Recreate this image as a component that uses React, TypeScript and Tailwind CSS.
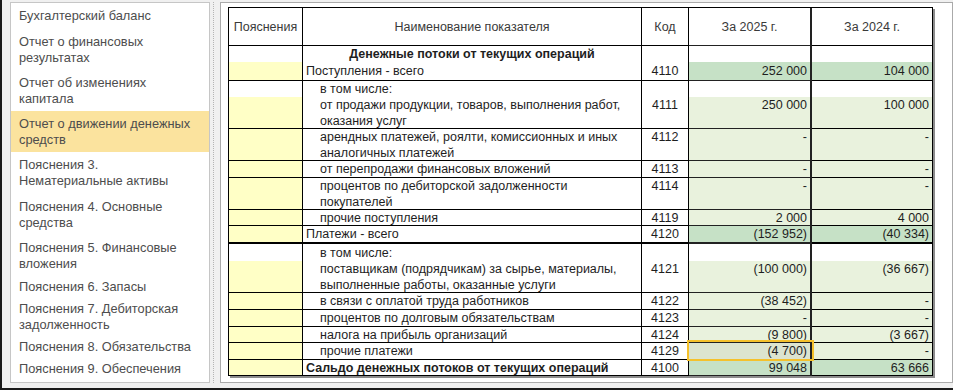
import React from "react";

type Row = {
  note: string;
  name: string;
  nameCls: string;
  code: string;
  v1: string;
  v2: string;
  valBg: string;
  open?: boolean;
  thick?: boolean;
  top?: boolean;
};

const YELLOW = "bg-[#ffffc6]";
const LIGHT = "bg-[#e9f2dd]";
const DARK = "bg-[#c6e1c6]";
const WHITE = "bg-white";

const rows: Row[] = [
  { note: WHITE, name: "Денежные потоки от текущих операций", nameCls: "font-bold text-center", code: "", v1: "", v2: "", valBg: WHITE, open: true },
  { note: YELLOW, name: "Поступления - всего", nameCls: "pl-[3px] items-center", code: "4110", v1: "252 000", v2: "104 000", valBg: DARK },
  { note: WHITE, name: "в том числе:", nameCls: "pl-[17px]", code: "", v1: "", v2: "", valBg: WHITE, open: true },
  { note: YELLOW, name: "от продажи продукции, товаров, выполнения работ, оказания услуг", nameCls: "pl-[17px]", code: "4111", v1: "250 000", v2: "100 000", valBg: LIGHT, top: true },
  { note: YELLOW, name: "арендных платежей, роялти, комиссионных и иных аналогичных платежей", nameCls: "pl-[17px]", code: "4112", v1: "-", v2: "-", valBg: LIGHT, top: true },
  { note: YELLOW, name: "от перепродажи финансовых вложений", nameCls: "pl-[17px]", code: "4113", v1: "-", v2: "-", valBg: LIGHT, top: true },
  { note: YELLOW, name: "процентов по дебиторской задолженности покупателей", nameCls: "pl-[17px]", code: "4114", v1: "-", v2: "-", valBg: LIGHT, top: true },
  { note: YELLOW, name: "прочие поступления", nameCls: "pl-[17px]", code: "4119", v1: "2 000", v2: "4 000", valBg: LIGHT, top: true },
  { note: YELLOW, name: "Платежи - всего", nameCls: "pl-[3px]", code: "4120", v1: "(152 952)", v2: "(40 334)", valBg: DARK, thick: true, top: true },
  { note: WHITE, name: "в том числе:", nameCls: "pl-[17px]", code: "", v1: "", v2: "", valBg: WHITE, open: true },
  { note: YELLOW, name: "поставщикам (подрядчикам) за сырье, материалы, выполненные работы, оказанные услуги", nameCls: "pl-[17px] pr-[20px]", code: "4121", v1: "(100 000)", v2: "(36 667)", valBg: LIGHT, top: true },
  { note: YELLOW, name: "в связи с оплатой труда работников", nameCls: "pl-[17px]", code: "4122", v1: "(38 452)", v2: "-", valBg: LIGHT, top: true },
  { note: YELLOW, name: "процентов по долговым обязательствам", nameCls: "pl-[17px]", code: "4123", v1: "-", v2: "-", valBg: LIGHT, top: true },
  { note: YELLOW, name: "налога на прибыль организаций", nameCls: "pl-[17px]", code: "4124", v1: "(9 800)", v2: "(3 667)", valBg: LIGHT, top: true },
  { note: YELLOW, name: "прочие платежи", nameCls: "pl-[17px]", code: "4129", v1: "(4 700)", v2: "-", valBg: LIGHT, top: true },
  { note: YELLOW, name: "Сальдо денежных потоков от текущих операций", nameCls: "pl-[3px] font-bold", code: "4100", v1: "99 048", v2: "63 666", valBg: DARK, top: true },
];

const menu: { label: string; h: string }[] = [
  { label: "Бухгалтерский баланс", h: "h-[26px]" },
  { label: "Отчет о финансовых результатах", h: "h-[41px]" },
  { label: "Отчет об изменениях капитала", h: "h-[41px]" },
  { label: "Отчет о движении денежных средств", h: "h-[41px]" },
  { label: "Пояснения 3. Нематериальные активы", h: "h-[41px]" },
  { label: "Пояснения 4. Основные средства", h: "h-[43px]" },
  { label: "Пояснения 5. Финансовые вложения", h: "h-[40px]" },
  { label: "Пояснения 6. Запасы", h: "h-[22px]" },
  { label: "Пояснения 7. Дебиторская задолженность", h: "h-[38px]" },
  { label: "Пояснения 8. Обязательства", h: "h-[22px]" },
  { label: "Пояснения 9. Обеспечения", h: "h-[22px]" },
];

const ACTIVE = 3;

const App = () => {
  return (
    <div className="w-[953px] h-[390px] bg-[#f0f0f0] border-l-2 border-b-2 border-[#1a1a1a] flex pt-[2px] pb-[5px] pl-[8px] font-['Liberation_Sans',Arial,sans-serif] text-[12.8px] leading-[16px] overflow-hidden">
      {/* Left list */}
      <aside className="w-[200px] shrink-0 bg-white border border-[#c6c6c6] text-[#4d4d4d]">
        {menu.map((m, i) => (
          <div
            key={m.label}
            className={`${m.h} flex items-center pl-[8px] pr-[6px] ${i === ACTIVE ? "bg-[#fbe39e]" : ""}`}
          >
            <span className="block">{m.label}</span>
          </div>
        ))}
      </aside>

      {/* Splitter */}
      <div className="w-[10px] shrink-0 pl-[3px]">
        <div className="h-full border-l border-dotted border-[#b4b4b4]" />
      </div>

      {/* Report */}
      <main className="flex-1 bg-white border border-[#aaaaaa] pl-[7px] pt-[4px]">
        <div className="w-max shadow-[2px_2px_0_#8c8c8c] text-[12.5px]">
          <div className="grid grid-cols-[74px_339px_47px_123px_121px] grid-rows-[38px_16px_19px_16px_32px_32px_17px_32px_16px_18px_17px_32px_17px_17px_16px_17px_16px] border-t border-l border-black text-[#1e1e1e]">
            {/* header */}
            <div className="border-r border-b border-black flex items-center justify-center text-[#3a3a3a]">Пояснения</div>
            <div className="border-r border-b border-black flex items-center justify-center text-[#3a3a3a]">Наименование показателя</div>
            <div className="border-r border-b border-black flex items-center justify-center text-[#3a3a3a]">Код</div>
            <div className="border-r-2 border-b border-[#222] flex items-center justify-center text-[#3a3a3a]">За 2025 г.</div>
            <div className="border-r border-b border-black flex items-center justify-center text-[#3a3a3a]">За 2024 г.</div>

            {rows.map((r, i) => {
              const b = r.open ? "border-r border-black" : r.thick ? "border-r border-b-2 border-black" : "border-r border-b border-black";
              const b4 = r.open ? "border-r-2 border-[#222]" : r.thick ? "border-r-2 border-b-2 border-[#222]" : "border-r-2 border-b border-[#222]";
              const v = r.top ? "items-start" : "items-center";
              const selected = r.code === "4129";
              return (
                <React.Fragment key={i}>
                  <div className={`${b} ${r.note}`} />
                  <div className={`${b} flex ${v} ${r.nameCls.includes("text-center") ? "justify-center" : ""} ${r.nameCls}`}>
                    <span>{r.name}</span>
                  </div>
                  <div className={`${b} flex ${v} justify-center`}>{r.code}</div>
                  <div className={`${b4} relative flex ${v} justify-end pr-[3px] ${selected ? "bg-[#dce4d0]" : r.valBg}`}>
                    {r.v1}
                    {selected && (
                      <div className="absolute -left-[2px] -top-[3px] -right-[4px] -bottom-[2px] border-2 border-[#f5c12c] pointer-events-none z-10" />
                    )}
                  </div>
                  <div className={`${b} flex ${v} justify-end pr-[3px] ${r.valBg}`}>{r.v2}</div>
                </React.Fragment>
              );
            })}
          </div>
        </div>
      </main>
    </div>
  );
};

export default App;
